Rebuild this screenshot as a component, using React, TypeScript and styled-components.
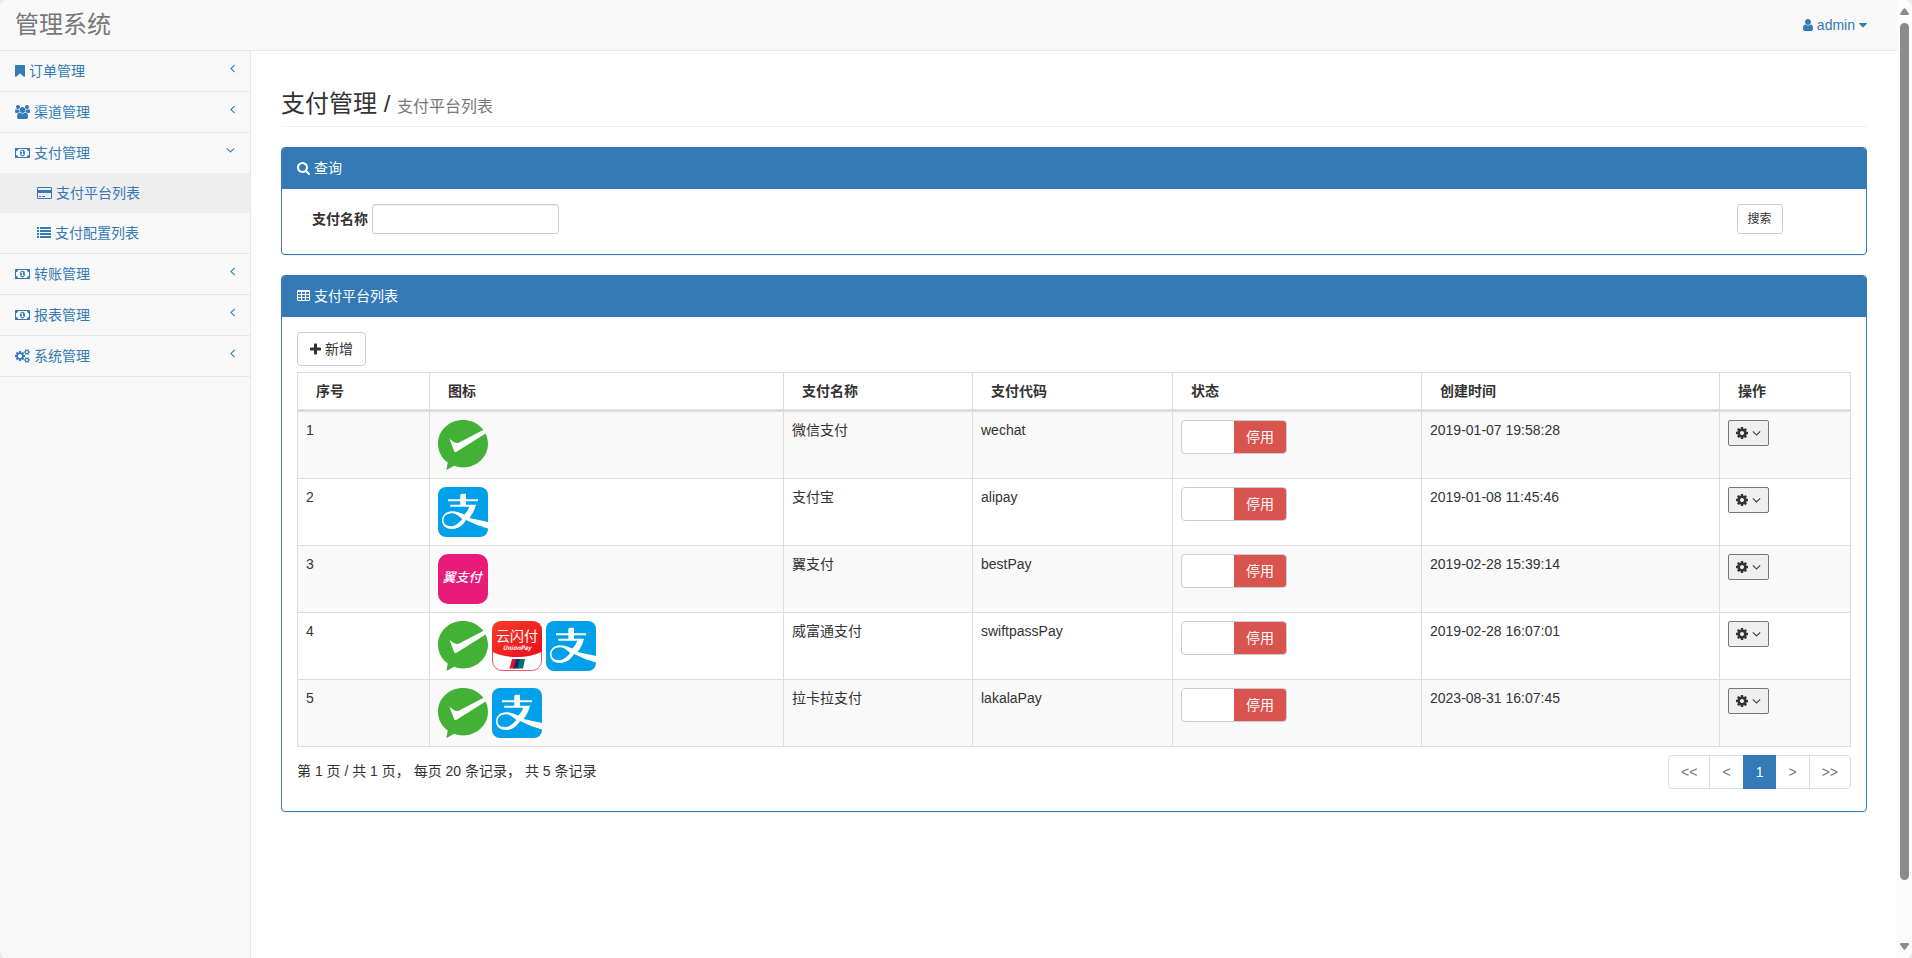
import React from "react";
import styled, { createGlobalStyle } from "styled-components";

const color = {
  link: "#337ab7",
  text: "#333",
  muted: "#777",
  line: "#e7e7e7",
  cell: "#ddd",
  control: "#ccc",
  bar: "#f8f8f8",
};

const GlobalStyle = createGlobalStyle`
  *, *::before, *::after { box-sizing: border-box; }
  body {
    margin: 0;
    background: #ececec;
    color: ${color.text};
    font: 14px/20px "Liberation Sans", "Noto Sans CJK SC", sans-serif;
  }
  a { color: ${color.link}; text-decoration: none; }
  ul { list-style: none; margin: 0; padding: 0; }
  button, input { font-family: inherit; color: inherit; margin: 0; }
`;

/* ---------- icons: glyphs on a 1792-unit em, drawn 14px high ---------- */

const glyphs = {
  bookmark: {
    width: 10,
    d: "M1164 128q23 0 44 9 33 13 52.5 41t19.5 62v1289q0 34-19.5 62t-52.5 41q-19 8-44 8-48 0-83-32l-441-424-441 424q-36 33-83 33-23 0-44-9-33-13-52.5-41t-19.5-62v-1289q0-34 19.5-62t52.5-41q21-9 44-9h1048z",
  },
  users: {
    width: 15,
    d: "M593 896q-162 5-265 128h-134q-82 0-138-40.5t-56-118.5q0-353 124-353 6 0 43.5 21t97.5 42.5 119 21.5q67 0 133-23-5 37-5 66 0 139 81 256zm1071 637q0 120-73 189.5t-194 69.5h-874q-121 0-194-69.5t-73-189.5q0-53 3.5-103.5t14-109 26.5-108.5 43-97.5 62-81 85.5-53.5 111.5-20q10 0 43 21.5t73 48 107 48 135 21.5 135-21.5 107-48 73-48 43-21.5q61 0 111.5 20t85.5 53.5 62 81 43 97.5 26.5 108.5 14 109 3.5 103.5zm-1024-1277q0 106-75 181t-181 75-181-75-75-181 75-181 181-75 181 75 75 181zm704 384q0 159-112.5 271.5t-271.5 112.5-271.5-112.5-112.5-271.5 112.5-271.5 271.5-112.5 271.5 112.5 112.5 271.5zm576 225q0 78-56 118.5t-138 40.5h-134q-103-123-265-128 81-117 81-256 0-29-5-66 66 23 133 23 59 0 119-21.5t97.5-42.5 43.5-21q124 0 124 353zm-128-609q0 106-75 181t-181 75-181-75-75-181 75-181 181-75 181 75 75 181z",
  },
  money: {
    width: 15,
    d: "M768 1152h384v-96h-128v-448h-114l-148 137 77 80q42-37 55-57h2v288h-128v96zm512-256q0 70-21 142t-59.5 134-101.5 101-138 39-138-39-101.5-101-59.5-134-21-142 21-142 59.5-134 101.5-101 138-39 138 39 101.5 101 59.5 134 21 142zm512 256v-512q-106 0-181-75t-75-181h-1152q0 106-75 181t-181 75v512q106 0 181 75t75 181h1152q0-106 75-181t181-75zm128-832v1152q0 26-19 45t-45 19h-1792q-26 0-45-19t-19-45v-1152q0-26 19-45t45-19h1792q26 0 45 19t19 45z",
  },
  card: {
    width: 15,
    d: "M1760 128q66 0 113 47t47 113v1216q0 66-47 113t-113 47h-1600q-66 0-113-47t-47-113v-1216q0-66 47-113t113-47h1600zm-1600 128q-13 0-22.5 9.5t-9.5 22.5v224h1664v-224q0-13-9.5-22.5t-22.5-9.5h-1600zm1600 1280q13 0 22.5-9.5t9.5-22.5v-608h-1664v608q0 13 9.5 22.5t22.5 9.5h1600zm-1504-128v-128h256v128h-256zm384 0v-128h384v128h-384z",
  },
  list: {
    width: 14,
    d: "M0 128h256v256h-256zM384 128h1408v256h-1408zM0 512h256v256h-256zM384 512h1408v256h-1408zM0 896h256v256h-256zM384 896h1408v256h-1408zM0 1280h256v256h-256zM384 1280h1408v256h-1408z",
  },
  cogs: {
    width: 15,
    d: "M896 896q0-106-75-181t-181-75-181 75-75 181 75 181 181 75 181-75 75-181zm768 512q0-52-38-90t-90-38-90 38-38 90q0 53 37.5 90.5t90.5 37.5 90.5-37.5 37.5-90.5zm0-1024q0-52-38-90t-90-38-90 38-38 90q0 53 37.5 90.5t90.5 37.5 90.5-37.5 37.5-90.5zm-384 421v185q0 10-7 19.5t-16 10.5l-155 24q-11 35-32 76 34 48 90 115 7 11 7 20 0 12-7 19-23 30-82.5 89.5t-78.5 59.5q-11 0-21-7l-115-90q-37 19-77 31-11 108-23 155-7 24-30 24h-186q-11 0-20-7.5t-10-17.5l-23-153q-34-10-75-31l-118 89q-7 7-20 7-11 0-21-8-144-133-144-160 0-9 7-19 10-14 41-53t47-61q-23-44-35-82l-152-24q-10-1-17-9.5t-7-19.5v-185q0-10 7-19.5t16-10.5l155-24q11-35 32-76-34-48-90-115-7-11-7-20 0-12 7-20 22-30 82-89t79-59q11 0 21 7l115 90q34-18 77-32 11-108 23-154 7-24 30-24h186q11 0 20 7.5t10 17.5l23 153q34 10 75 31l118-89q8-7 20-7 11 0 21 8 144 133 144 160 0 9-7 19-12 16-42 54t-45 60q23 48 34 82l152 23q10 2 17 10.5t7 19.5zm640 533v140q0 16-149 31-12 27-30 52 51 113 51 138 0 4-4 7-122 71-124 71-8 0-46-47t-52-68q-20 2-30 2t-30-2q-14 21-52 68t-46 47q-2 0-124-71-4-3-4-7 0-25 51-138-18-25-30-52-149-15-149-31v-140q0-16 149-31 13-29 30-52-51-113-51-138 0-4 4-7 4-2 35-20t59-34 30-16q8 0 46 46.5t52 67.5q20-2 30-2t30 2q51-71 92-112l6-2q4 0 124 70 4 3 4 7 0 25-51 138 17 23 30 52 149 15 149 31zm0-1024v140q0 16-149 31-12 27-30 52 51 113 51 138 0 4-4 7-122 71-124 71-8 0-46-47t-52-68q-20 2-30 2t-30-2q-14 21-52 68t-46 47q-2 0-124-71-4-3-4-7 0-25 51-138-18-25-30-52-149-15-149-31v-140q0-16 149-31 13-29 30-52-51-113-51-138 0-4 4-7 4-2 35-20t59-34 30-16q8 0 46 46.5t52 67.5q20-2 30-2t30 2q51-71 92-112l6-2q4 0 124 70 4 3 4 7 0 25-51 138 17 23 30 52 149 15 149 31z",
  },
  cog: {
    width: 12,
    d: "M1024 896q0-106-75-181t-181-75-181 75-75 181 75 181 181 75 181-75 75-181zm512-109v222q0 12-8 23t-20 13l-185 28q-19 54-39 91 35 50 107 138 10 12 10 25t-9 23q-27 37-99 108t-94 71q-12 0-26-9l-138-108q-44 23-91 38-16 136-29 186-7 28-36 28h-222q-14 0-24.5-8.5t-11.5-21.5l-28-184q-49-16-90-37l-141 107q-10 9-25 9-14 0-25-11-126-114-165-168-7-10-7-23 0-12 8-23 15-21 51-66.5t54-70.5q-27-50-41-99l-183-27q-13-2-21-12.5t-8-23.5v-222q0-12 8-23t19-13l186-28q14-46 39-92-40-57-107-138-10-12-10-24 0-10 9-23 26-36 98.5-107.5t94.5-71.5q13 0 26 10l138 107q44-23 91-38 16-136 29-186 7-28 36-28h222q14 0 24.5 8.5t11.5 21.5l28 184q49 16 90 37l142-107q9-9 24-9 13 0 25 10 129 119 165 170 7 8 7 22 0 12-8 23-15 21-51 66.5t-54 70.5q26 50 41 98l183 28q13 2 21 12.5t8 23.5z",
  },
  user: {
    width: 10,
    d: "M1280 1399q0 109-62.5 187t-150.5 78h-854q-88 0-150.5-78t-62.5-187q0-85 8.5-160.5t31.5-152 58.5-131 94-89 134.5-34.5q131 128 313 128t313-128q76 0 134.5 34.5t94 89 58.5 131 31.5 152 8.5 160.5zm-256-887q0 159-112.5 271.5t-271.5 112.5-271.5-112.5-112.5-271.5 112.5-271.5 271.5-112.5 271.5 112.5 112.5 271.5z",
  },
  search: {
    width: 13,
    d: "M1152 832q0-185-131.5-316.5t-316.5-131.5-316.5 131.5-131.5 316.5 131.5 316.5 316.5 131.5 316.5-131.5 131.5-316.5zm512 832q0 52-38 90t-90 38q-54 0-90-38l-343-342q-179 124-399 124-143 0-273.5-55.5t-225-150-150-225-55.5-273.5 55.5-273.5 150-225 225-150 273.5-55.5 273.5 55.5 225 150 150 225 55.5 273.5q0 220-124 399l343 343q37 37 37 90z",
  },
  table: {
    width: 13,
    d: "M128 128h1408q128 0 128 128v1152q0 128-128 128h-1408q-128 0-128-128v-1152q0-128 128-128zM128 384v256h384v-256zM640 384v256h384v-256zM1152 384v256h384v-256zM128 768v256h384v-256zM640 768v256h384v-256zM1152 768v256h384v-256zM128 1152v256h384v-256zM640 1152v256h384v-256zM1152 1152v256h384v-256z",
  },
  plus: {
    width: 11,
    d: "M1408 800v192q0 40-28 68t-68 28h-416v416q0 40-28 68t-68 28h-192q-40 0-68-28t-28-68v-416h-416q-40 0-68-28t-28-68v-192q0-40 28-68t68-28h416v-416q0-40 28-68t68-28h192q40 0 68 28t28 68v416h416q40 0 68 28t28 68z",
  },
  angleLeft: {
    width: 5,
    d: "M627 544q0 13-10 23l-393 393 393 393q10 10 10 23t-10 23l-50 50q-10 10-23 10t-23-10l-466-466q-10-10-10-23t10-23l466-466q10-10 23-10t23 10l50 50q10 10 10 23z",
  },
  angleDown: {
    width: 9,
    d: "M1075 736q0 13-10 23l-466 466q-10 10-23 10t-23-10l-466-466q-10-10-10-23t10-23l50-50q10-10 23-10t23 10l393 393 393-393q10-10 23-10t23 10l50 50q10 10 10 23z",
  },
  caret: {
    width: 8,
    d: "M1024 704q0 26-19 45l-448 448q-19 19-45 19t-45-19l-448-448q-19-19-19-45t19-45 45-19h896q26 0 45 19t19 45z",
  },
};

type GlyphName = keyof typeof glyphs;

const Glyph = styled.svg`
  flex: none;
  display: block;
  fill: currentColor;
`;

function Icon({ name, className }: { name: GlyphName; className?: string }) {
  const { width, d } = glyphs[name];
  return (
    <Glyph className={className} width={width} height={14} viewBox={`0 0 ${width * 128} 1792`} aria-hidden="true">
      <path fillRule="evenodd" d={d} />
    </Glyph>
  );
}

/* ---------- payment logos ---------- */

const LogoSvg = styled.svg`
  display: block;
  flex: none;
`;

function WechatLogo() {
  return (
    <LogoSvg width={50} height={50} viewBox="0 0 50 50" role="img" aria-label="微信支付">
      <path fill="#43b036" d="M25 0C39 0 50 10.5 50 23.7S39 47.4 25 47.4c-3.2 0-6-.5-8.9-1.7L8.4 50l1.3-7.6C3.6 38 0 31.4 0 23.7 0 10.5 11 0 25 0z" />
      <path fill="#fff" d="M11.3 18.2c1.7 2 3.5 3.5 5.5 4.4 1.4.5 3 .4 4.4-.2L45.6 9.7l3.200 3L19 31.500c-1.600 1-2.300.9-2.900-.5z" />
    </LogoSvg>
  );
}

function AlipayLogo() {
  return (
    <LogoSvg width={50} height={50} viewBox="0 0 50 50" role="img" aria-label="支付宝">
      <rect width="50" height="50" rx="8" fill="#00a0ea" />
      <path fill="#fff" d="M22.3 8.500q0-1.700 1.700-1.700H28v5.400h12v2H28v3.500h10q-2 8-6.500 13.200L50 35v6.600q-12-3.400-22-8.600C24 39.500 19 42 13.500 42 7.500 42 4 38.500 4 33.300 4 28 8.300 24.200 14 24.200c4.500 0 8 1.500 12.300 3.400 2.500-2.500 4-5 4.900-7.900H12.200v-2h10.100v-3.500H10v-2h12.300z" />
      <path fill="#00a0ea" d="M14.300 26.200C9.300 26.100 5.500 29 5.500 33c0 3.900 3 6.200 7.500 6.200 4.300 0 8-3.200 11.200-7.200-3.800-3.600-6.600-5.700-9.900-5.800z" />
    </LogoSvg>
  );
}

const LogoText = styled.text`
  fill: #fff;
  text-anchor: middle;
  font-family: "Noto Sans CJK SC", sans-serif;
`;

function BestPayLogo() {
  return (
    <LogoSvg width={50} height={50} viewBox="0 0 50 50" role="img" aria-label="翼支付">
      <rect width="50" height="50" fill="#fff" />
      <rect width="50" height="50" rx="10" fill="#e81b7b" />
      <LogoText x="24" y="28" fontSize="13" fontWeight="500" fontStyle="italic">翼支付</LogoText>
    </LogoSvg>
  );
}

function UnionPayLogo() {
  return (
    <LogoSvg width={50} height={50} viewBox="0 0 50 50" role="img" aria-label="云闪付">
      <defs>
        <linearGradient id="union-red" x1="0" y1="0" x2="1" y2="1">
          <stop offset="0" stopColor="#fb3a26" />
          <stop offset="1" stopColor="#e90f1d" />
        </linearGradient>
      </defs>
      <rect x=".5" y=".5" width="49" height="49" rx="9.5" fill="#fff" stroke="#ee5a5e" />
      <path fill="url(#union-red)" d="M0 10Q0 0 10 0H40Q50 0 50 10V30.700Q39 36 25 36T0 30.700z" />
      <LogoText x="25" y="20" fontSize="14" fontWeight="400">云闪付</LogoText>
      <LogoText x="25" y="29" fontSize="6" fontWeight="700" fontStyle="italic">UnionPay</LogoText>
      <path fill="#e60f2c" d="M20 38h5l-2 9.500h-5.500z" />
      <path fill="#0a2f6d" d="M24 38h5l-2 9.500h-5.500z" />
      <path fill="#04706b" d="M28 38h5l-2 9.500h-5.500z" />
    </LogoSvg>
  );
}

const logos = { wechat: WechatLogo, alipay: AlipayLogo, bestPay: BestPayLogo, unionPay: UnionPayLogo };
type LogoName = keyof typeof logos;

/* ---------- page frame ---------- */

const Window = styled.div`
  display: grid;
  grid-template-columns: minmax(0, 1fr) 15px;
  min-height: 100vh;
  background: #fff;
  border-radius: 8px;
  overflow: clip;
`;

const Page = styled.div`
  display: flex;
  flex-direction: column;
`;

const TopBar = styled.header`
  display: flex;
  align-items: center;
  justify-content: space-between;
  height: 51px;
  padding: 0 30px 0 15px;
  background: ${color.bar};
  border-bottom: 1px solid ${color.line};
`;

const Brand = styled.a`
  color: ${color.muted};
  font-size: 24px;
  line-height: 30px;
`;

const UserMenu = styled.button`
  display: flex;
  align-items: center;
  gap: 4px;
  padding: 0;
  border: 0;
  background: none;
  color: ${color.link};
  font-size: 14px;
  line-height: 20px;
`;

const Columns = styled.div`
  display: grid;
  grid-template-columns: 251px minmax(0, 1fr);
  flex: 1;
`;

const Sidebar = styled.nav`
  background: ${color.bar};
  border-right: 1px solid ${color.line};
`;

const MenuItem = styled.li`
  border-bottom: 1px solid ${color.line};
`;

const MenuLink = styled.a<{ $sub?: boolean; $active?: boolean }>`
  display: flex;
  align-items: center;
  gap: 4px;
  padding: 10px 15px 10px ${(p) => (p.$sub ? 37 : 15)}px;
  background: ${(p) => (p.$active ? "#eee" : "transparent")};
`;

const MenuArrow = styled(Icon)`
  align-self: flex-start;
  margin-left: auto;
`;

const Main = styled.main`
  padding: 40px 30px;
`;

const PageTitle = styled.h1`
  margin: 0 0 20px;
  padding-bottom: 9px;
  border-bottom: 1px solid #eee;
  font-size: 24px;
  font-weight: 400;
  line-height: 26px;
`;

const SubTitle = styled.small`
  color: ${color.muted};
  font-size: 16px;
  line-height: 20px;
`;

/* ---------- panels ---------- */

const Panel = styled.section`
  margin-bottom: 20px;
  border: 1px solid ${color.link};
  border-radius: 4px;
  background: #fff;
  box-shadow: 0 1px 1px rgba(0, 0, 0, 0.05);
`;

const PanelHeading = styled.h2`
  display: flex;
  align-items: center;
  gap: 4px;
  margin: 0;
  padding: 10px 15px 11px;
  border-radius: 3px 3px 0 0;
  background: ${color.link};
  color: #fff;
  font-size: 14px;
  font-weight: 400;
  line-height: 20px;
`;

const PanelBody = styled.div`
  padding: 15px 15px 20px;
`;

const SearchForm = styled.form`
  display: grid;
  grid-template-columns: 11fr 1fr;
`;

const FormCell = styled.div`
  display: flex;
  align-items: center;
  gap: 4px;
  padding: 0 15px;
`;

const FieldLabel = styled.label`
  font-weight: 700;
`;

const TextInput = styled.input`
  width: 187px;
  height: 30px;
  padding: 5px 10px;
  border: 1px solid ${color.control};
  border-radius: 3px;
  background: #fff;
  box-shadow: inset 0 1px 1px rgba(0, 0, 0, 0.075);
  font-size: 12px;
`;

const Button = styled.button<{ $small?: boolean }>`
  display: inline-flex;
  align-items: center;
  gap: 4px;
  height: ${(p) => (p.$small ? 30 : 34)}px;
  padding: 0 ${(p) => (p.$small ? 10 : 12)}px;
  border: 1px solid ${color.control};
  border-radius: ${(p) => (p.$small ? 3 : 4)}px;
  background: #fff;
  font-size: ${(p) => (p.$small ? 12 : 14)}px;
  line-height: 20px;
`;

/* ---------- table ---------- */

const Table = styled.table`
  width: 100%;
  margin-top: 6px;
  border-collapse: collapse;
  table-layout: fixed;
  border: 1px solid ${color.cell};

  tbody tr:nth-child(odd) {
    background: #f9f9f9;
  }
`;

const HeadCell = styled.th`
  padding: 8px 18px;
  border: 1px solid ${color.cell};
  border-bottom-width: 3px;
  text-align: left;
`;

const Cell = styled.td`
  padding: 8px;
  border: 1px solid ${color.cell};
  vertical-align: top;
`;

const LogoRow = styled.div`
  display: flex;
  gap: 4px;
`;

const Toggle = styled.label`
  display: flex;
  width: 106px;
  height: 34px;
  border: 1px solid ${color.control};
  border-radius: 4px;
  overflow: hidden;
  background: #fff;
`;

const ToggleInput = styled.input`
  flex: 1;
  appearance: none;
`;

const ToggleText = styled.span`
  flex: 1;
  background: #d9534f;
  color: #fff;
  line-height: 32px;
  text-align: center;
`;

const ActionButton = styled.button`
  display: flex;
  align-items: center;
  gap: 4px;
  height: 26px;
  padding: 0 7px;
  border: 1px solid #767676;
  border-radius: 2px;
  background: #efefef;
`;

const TableFooter = styled.div`
  display: flex;
  justify-content: space-between;
  padding: 8px 0 2px;
`;

const Summary = styled.p`
  margin: 0;
  padding: 6px 0;
  white-space: pre;
`;

const Pagination = styled.ul`
  display: flex;
`;

const PageLink = styled.a<{ $active?: boolean }>`
  position: relative;
  z-index: ${(p) => (p.$active ? 1 : 0)};
  display: block;
  margin-left: -1px;
  padding: 6px 12px;
  border: 1px solid ${(p) => (p.$active ? color.link : color.cell)};
  background: ${(p) => (p.$active ? color.link : "#fff")};
  color: ${(p) => (p.$active ? "#fff" : color.muted)};

  li:first-child > & {
    border-radius: 4px 0 0 4px;
  }
  li:last-child > & {
    border-radius: 0 4px 4px 0;
  }
`;

/* ---------- window scroll bar ---------- */

const ScrollBar = styled.div`
  position: sticky;
  top: 0;
  display: flex;
  flex-direction: column;
  align-items: center;
  height: 100vh;
  padding: 8px 0;
  background: #fcfcfc;
`;

const ScrollTrack = styled.div`
  flex: 1;
  display: flex;
  flex-direction: column;
  width: 9px;
  padding: 8px 0;
`;

const ScrollThumb = styled.div`
  height: 94%;
  border-radius: 5px;
  background: #8b8b8b;
`;

const ScrollArrow = styled.svg`
  display: block;
  fill: #8b8b8b;
`;

/* ---------- data ---------- */

interface MenuEntry {
  icon: GlyphName;
  label: string;
  children?: { icon: GlyphName; label: string; active?: boolean }[];
}

const menu: MenuEntry[] = [
  { icon: "bookmark", label: "订单管理" },
  { icon: "users", label: "渠道管理" },
  {
    icon: "money",
    label: "支付管理",
    children: [
      { icon: "card", label: "支付平台列表", active: true },
      { icon: "list", label: "支付配置列表" },
    ],
  },
  { icon: "money", label: "转账管理" },
  { icon: "money", label: "报表管理" },
  { icon: "cogs", label: "系统管理" },
];

const columns = [
  { title: "序号", width: 132 },
  { title: "图标", width: 354 },
  { title: "支付名称", width: 189 },
  { title: "支付代码", width: 200 },
  { title: "状态", width: 249 },
  { title: "创建时间", width: 298 },
  { title: "操作", width: 131 },
];

const platforms: { icons: LogoName[]; name: string; code: string; created: string }[] = [
  { icons: ["wechat"], name: "微信支付", code: "wechat", created: "2019-01-07 19:58:28" },
  { icons: ["alipay"], name: "支付宝", code: "alipay", created: "2019-01-08 11:45:46" },
  { icons: ["bestPay"], name: "翼支付", code: "bestPay", created: "2019-02-28 15:39:14" },
  { icons: ["wechat", "unionPay", "alipay"], name: "威富通支付", code: "swiftpassPay", created: "2019-02-28 16:07:01" },
  { icons: ["wechat", "alipay"], name: "拉卡拉支付", code: "lakalaPay", created: "2023-08-31 16:07:45" },
];

const pages = ["<<", "<", "1", ">", ">>"];

export default function App() {
  return (
    <>
      <GlobalStyle />
      <Window>
        <Page>
          <TopBar>
            <Brand href="#">管理系统</Brand>
            <UserMenu type="button">
              <Icon name="user" />
              admin
              <Icon name="caret" />
            </UserMenu>
          </TopBar>
          <Columns>
            <Sidebar>
              <ul>
                {menu.map((entry) => (
                  <MenuItem key={entry.label}>
                    <MenuLink href="#">
                      <Icon name={entry.icon} />
                      {entry.label}
                      <MenuArrow name={entry.children ? "angleDown" : "angleLeft"} />
                    </MenuLink>
                    {entry.children && (
                      <ul>
                        {entry.children.map((child) => (
                          <li key={child.label}>
                            <MenuLink href="#" $sub $active={child.active}>
                              <Icon name={child.icon} />
                              {child.label}
                            </MenuLink>
                          </li>
                        ))}
                      </ul>
                    )}
                  </MenuItem>
                ))}
              </ul>
            </Sidebar>
            <Main>
              <PageTitle>
                支付管理 / <SubTitle>支付平台列表</SubTitle>
              </PageTitle>

              <Panel>
                <PanelHeading>
                  <Icon name="search" />
                  查询
                </PanelHeading>
                <PanelBody>
                  <SearchForm onSubmit={(event) => event.preventDefault()}>
                    <FormCell>
                      <FieldLabel htmlFor="pay-name">支付名称</FieldLabel>
                      <TextInput id="pay-name" type="text" />
                    </FormCell>
                    <FormCell>
                      <Button type="submit" $small>搜索</Button>
                    </FormCell>
                  </SearchForm>
                </PanelBody>
              </Panel>

              <Panel>
                <PanelHeading>
                  <Icon name="table" />
                  支付平台列表
                </PanelHeading>
                <PanelBody>
                  <Button type="button">
                    <Icon name="plus" />
                    新增
                  </Button>
                  <Table>
                    <colgroup>
                      {columns.map((column) => (
                        <col key={column.title} width={column.width} />
                      ))}
                    </colgroup>
                    <thead>
                      <tr>
                        {columns.map((column) => (
                          <HeadCell key={column.title} scope="col">{column.title}</HeadCell>
                        ))}
                      </tr>
                    </thead>
                    <tbody>
                      {platforms.map((platform, index) => (
                        <tr key={platform.code}>
                          <Cell>{index + 1}</Cell>
                          <Cell>
                            <LogoRow>
                              {platform.icons.map((name) => {
                                const Logo = logos[name];
                                return <Logo key={name} />;
                              })}
                            </LogoRow>
                          </Cell>
                          <Cell>{platform.name}</Cell>
                          <Cell>{platform.code}</Cell>
                          <Cell>
                            <Toggle>
                              <ToggleInput type="checkbox" />
                              <ToggleText>停用</ToggleText>
                            </Toggle>
                          </Cell>
                          <Cell>{platform.created}</Cell>
                          <Cell>
                            <ActionButton type="button" aria-label="操作">
                              <Icon name="cog" />
                              <Icon name="angleDown" />
                            </ActionButton>
                          </Cell>
                        </tr>
                      ))}
                    </tbody>
                  </Table>
                  <TableFooter>
                    <Summary>第 1 页 / 共 1 页， 每页 20 条记录， 共 5 条记录</Summary>
                    <Pagination>
                      {pages.map((page) => (
                        <li key={page}>
                          <PageLink href="#" $active={page === "1"}>{page}</PageLink>
                        </li>
                      ))}
                    </Pagination>
                  </TableFooter>
                </PanelBody>
              </Panel>
            </Main>
          </Columns>
        </Page>
        <ScrollBar aria-hidden="true">
          <ScrollArrow width={9} height={7} viewBox="0 0 9 7">
            <path d="M3.5.8q1-1.300 2 0L9 5.800Q9 7 8 7H1Q0 7 0 5.800z" />
          </ScrollArrow>
          <ScrollTrack>
            <ScrollThumb />
          </ScrollTrack>
          <ScrollArrow width={9} height={7} viewBox="0 0 9 7">
            <path d="M3.5 6.200q1 1.300 2 0L9 1.200Q9 0 8 0H1Q0 0 0 1.200z" />
          </ScrollArrow>
        </ScrollBar>
      </Window>
    </>
  );
}
